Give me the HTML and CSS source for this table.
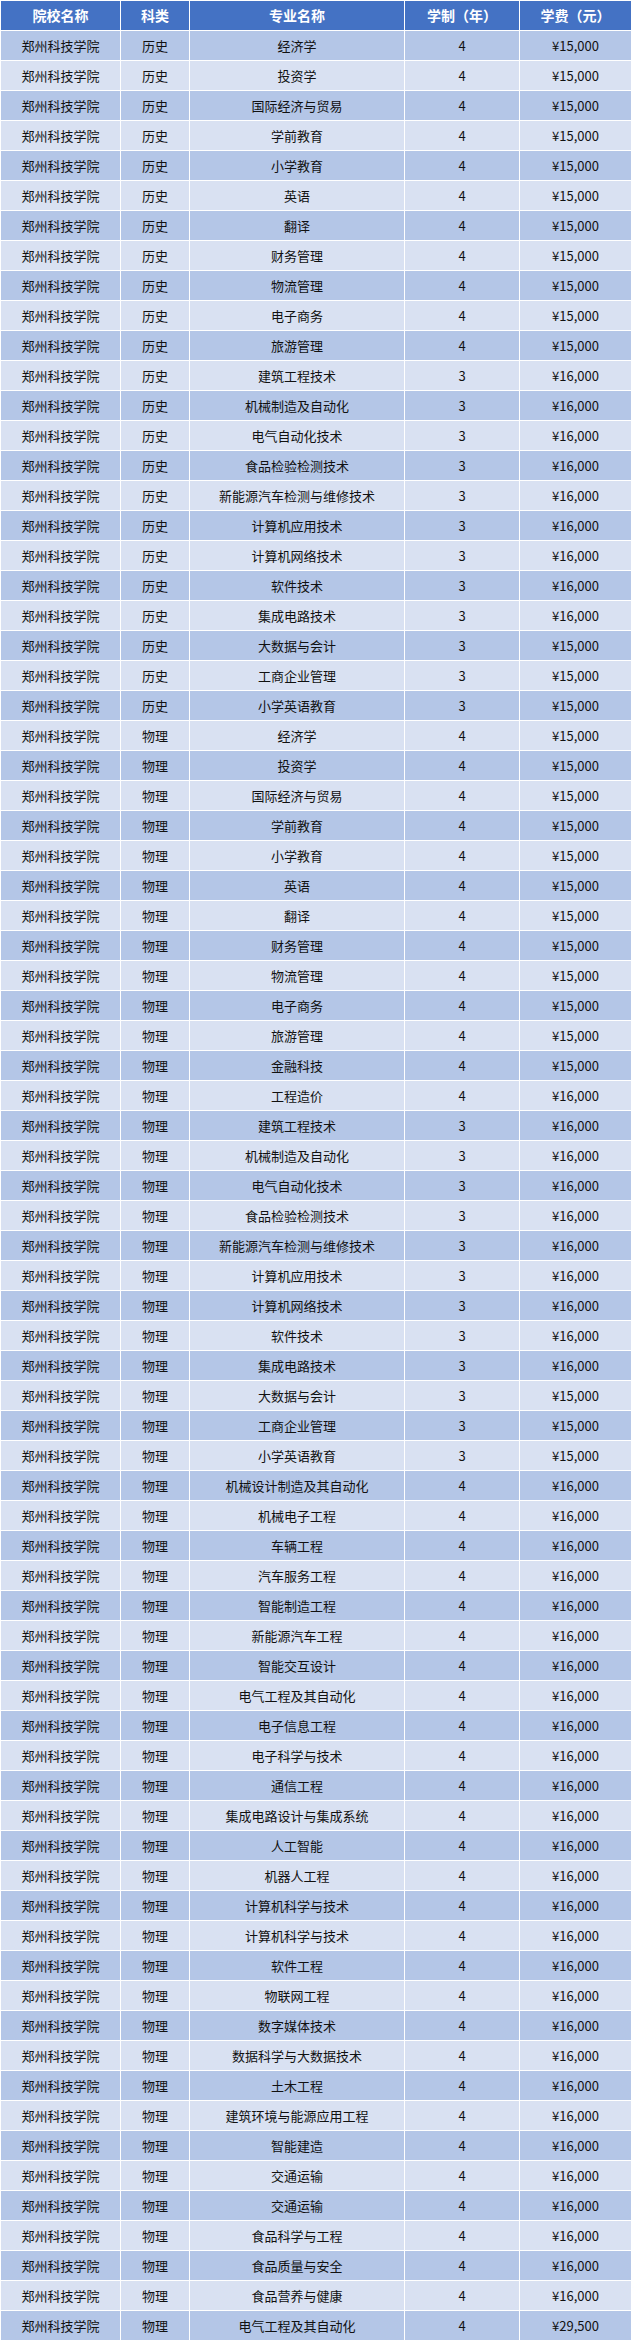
FILE: index.html
```html
<!DOCTYPE html>
<html lang="zh-CN">
<head>
<meta charset="utf-8">
<title>郑州科技学院</title>
<link rel="stylesheet" href="styles.css">
</head>
<body>
<table class="fees">
<colgroup><col class="c1"><col class="c2"><col class="c3"><col class="c4"><col class="c5"></colgroup>
<thead>
<tr><th>院校名称</th><th>科类</th><th>专业名称</th><th>学制（年）</th><th>学费（元）</th></tr>
</thead>
<tbody>
<tr><td>郑州科技学院</td><td>历史</td><td>经济学</td><td>4</td><td>¥15,000</td></tr>
<tr><td>郑州科技学院</td><td>历史</td><td>投资学</td><td>4</td><td>¥15,000</td></tr>
<tr><td>郑州科技学院</td><td>历史</td><td>国际经济与贸易</td><td>4</td><td>¥15,000</td></tr>
<tr><td>郑州科技学院</td><td>历史</td><td>学前教育</td><td>4</td><td>¥15,000</td></tr>
<tr><td>郑州科技学院</td><td>历史</td><td>小学教育</td><td>4</td><td>¥15,000</td></tr>
<tr><td>郑州科技学院</td><td>历史</td><td>英语</td><td>4</td><td>¥15,000</td></tr>
<tr><td>郑州科技学院</td><td>历史</td><td>翻译</td><td>4</td><td>¥15,000</td></tr>
<tr><td>郑州科技学院</td><td>历史</td><td>财务管理</td><td>4</td><td>¥15,000</td></tr>
<tr><td>郑州科技学院</td><td>历史</td><td>物流管理</td><td>4</td><td>¥15,000</td></tr>
<tr><td>郑州科技学院</td><td>历史</td><td>电子商务</td><td>4</td><td>¥15,000</td></tr>
<tr><td>郑州科技学院</td><td>历史</td><td>旅游管理</td><td>4</td><td>¥15,000</td></tr>
<tr><td>郑州科技学院</td><td>历史</td><td>建筑工程技术</td><td>3</td><td>¥16,000</td></tr>
<tr><td>郑州科技学院</td><td>历史</td><td>机械制造及自动化</td><td>3</td><td>¥16,000</td></tr>
<tr><td>郑州科技学院</td><td>历史</td><td>电气自动化技术</td><td>3</td><td>¥16,000</td></tr>
<tr><td>郑州科技学院</td><td>历史</td><td>食品检验检测技术</td><td>3</td><td>¥16,000</td></tr>
<tr><td>郑州科技学院</td><td>历史</td><td>新能源汽车检测与维修技术</td><td>3</td><td>¥16,000</td></tr>
<tr><td>郑州科技学院</td><td>历史</td><td>计算机应用技术</td><td>3</td><td>¥16,000</td></tr>
<tr><td>郑州科技学院</td><td>历史</td><td>计算机网络技术</td><td>3</td><td>¥16,000</td></tr>
<tr><td>郑州科技学院</td><td>历史</td><td>软件技术</td><td>3</td><td>¥16,000</td></tr>
<tr><td>郑州科技学院</td><td>历史</td><td>集成电路技术</td><td>3</td><td>¥16,000</td></tr>
<tr><td>郑州科技学院</td><td>历史</td><td>大数据与会计</td><td>3</td><td>¥15,000</td></tr>
<tr><td>郑州科技学院</td><td>历史</td><td>工商企业管理</td><td>3</td><td>¥15,000</td></tr>
<tr><td>郑州科技学院</td><td>历史</td><td>小学英语教育</td><td>3</td><td>¥15,000</td></tr>
<tr><td>郑州科技学院</td><td>物理</td><td>经济学</td><td>4</td><td>¥15,000</td></tr>
<tr><td>郑州科技学院</td><td>物理</td><td>投资学</td><td>4</td><td>¥15,000</td></tr>
<tr><td>郑州科技学院</td><td>物理</td><td>国际经济与贸易</td><td>4</td><td>¥15,000</td></tr>
<tr><td>郑州科技学院</td><td>物理</td><td>学前教育</td><td>4</td><td>¥15,000</td></tr>
<tr><td>郑州科技学院</td><td>物理</td><td>小学教育</td><td>4</td><td>¥15,000</td></tr>
<tr><td>郑州科技学院</td><td>物理</td><td>英语</td><td>4</td><td>¥15,000</td></tr>
<tr><td>郑州科技学院</td><td>物理</td><td>翻译</td><td>4</td><td>¥15,000</td></tr>
<tr><td>郑州科技学院</td><td>物理</td><td>财务管理</td><td>4</td><td>¥15,000</td></tr>
<tr><td>郑州科技学院</td><td>物理</td><td>物流管理</td><td>4</td><td>¥15,000</td></tr>
<tr><td>郑州科技学院</td><td>物理</td><td>电子商务</td><td>4</td><td>¥15,000</td></tr>
<tr><td>郑州科技学院</td><td>物理</td><td>旅游管理</td><td>4</td><td>¥15,000</td></tr>
<tr><td>郑州科技学院</td><td>物理</td><td>金融科技</td><td>4</td><td>¥15,000</td></tr>
<tr><td>郑州科技学院</td><td>物理</td><td>工程造价</td><td>4</td><td>¥16,000</td></tr>
<tr><td>郑州科技学院</td><td>物理</td><td>建筑工程技术</td><td>3</td><td>¥16,000</td></tr>
<tr><td>郑州科技学院</td><td>物理</td><td>机械制造及自动化</td><td>3</td><td>¥16,000</td></tr>
<tr><td>郑州科技学院</td><td>物理</td><td>电气自动化技术</td><td>3</td><td>¥16,000</td></tr>
<tr><td>郑州科技学院</td><td>物理</td><td>食品检验检测技术</td><td>3</td><td>¥16,000</td></tr>
<tr><td>郑州科技学院</td><td>物理</td><td>新能源汽车检测与维修技术</td><td>3</td><td>¥16,000</td></tr>
<tr><td>郑州科技学院</td><td>物理</td><td>计算机应用技术</td><td>3</td><td>¥16,000</td></tr>
<tr><td>郑州科技学院</td><td>物理</td><td>计算机网络技术</td><td>3</td><td>¥16,000</td></tr>
<tr><td>郑州科技学院</td><td>物理</td><td>软件技术</td><td>3</td><td>¥16,000</td></tr>
<tr><td>郑州科技学院</td><td>物理</td><td>集成电路技术</td><td>3</td><td>¥16,000</td></tr>
<tr><td>郑州科技学院</td><td>物理</td><td>大数据与会计</td><td>3</td><td>¥15,000</td></tr>
<tr><td>郑州科技学院</td><td>物理</td><td>工商企业管理</td><td>3</td><td>¥15,000</td></tr>
<tr><td>郑州科技学院</td><td>物理</td><td>小学英语教育</td><td>3</td><td>¥15,000</td></tr>
<tr><td>郑州科技学院</td><td>物理</td><td>机械设计制造及其自动化</td><td>4</td><td>¥16,000</td></tr>
<tr><td>郑州科技学院</td><td>物理</td><td>机械电子工程</td><td>4</td><td>¥16,000</td></tr>
<tr><td>郑州科技学院</td><td>物理</td><td>车辆工程</td><td>4</td><td>¥16,000</td></tr>
<tr><td>郑州科技学院</td><td>物理</td><td>汽车服务工程</td><td>4</td><td>¥16,000</td></tr>
<tr><td>郑州科技学院</td><td>物理</td><td>智能制造工程</td><td>4</td><td>¥16,000</td></tr>
<tr><td>郑州科技学院</td><td>物理</td><td>新能源汽车工程</td><td>4</td><td>¥16,000</td></tr>
<tr><td>郑州科技学院</td><td>物理</td><td>智能交互设计</td><td>4</td><td>¥16,000</td></tr>
<tr><td>郑州科技学院</td><td>物理</td><td>电气工程及其自动化</td><td>4</td><td>¥16,000</td></tr>
<tr><td>郑州科技学院</td><td>物理</td><td>电子信息工程</td><td>4</td><td>¥16,000</td></tr>
<tr><td>郑州科技学院</td><td>物理</td><td>电子科学与技术</td><td>4</td><td>¥16,000</td></tr>
<tr><td>郑州科技学院</td><td>物理</td><td>通信工程</td><td>4</td><td>¥16,000</td></tr>
<tr><td>郑州科技学院</td><td>物理</td><td>集成电路设计与集成系统</td><td>4</td><td>¥16,000</td></tr>
<tr><td>郑州科技学院</td><td>物理</td><td>人工智能</td><td>4</td><td>¥16,000</td></tr>
<tr><td>郑州科技学院</td><td>物理</td><td>机器人工程</td><td>4</td><td>¥16,000</td></tr>
<tr><td>郑州科技学院</td><td>物理</td><td>计算机科学与技术</td><td>4</td><td>¥16,000</td></tr>
<tr><td>郑州科技学院</td><td>物理</td><td>计算机科学与技术</td><td>4</td><td>¥16,000</td></tr>
<tr><td>郑州科技学院</td><td>物理</td><td>软件工程</td><td>4</td><td>¥16,000</td></tr>
<tr><td>郑州科技学院</td><td>物理</td><td>物联网工程</td><td>4</td><td>¥16,000</td></tr>
<tr><td>郑州科技学院</td><td>物理</td><td>数字媒体技术</td><td>4</td><td>¥16,000</td></tr>
<tr><td>郑州科技学院</td><td>物理</td><td>数据科学与大数据技术</td><td>4</td><td>¥16,000</td></tr>
<tr><td>郑州科技学院</td><td>物理</td><td>土木工程</td><td>4</td><td>¥16,000</td></tr>
<tr><td>郑州科技学院</td><td>物理</td><td>建筑环境与能源应用工程</td><td>4</td><td>¥16,000</td></tr>
<tr><td>郑州科技学院</td><td>物理</td><td>智能建造</td><td>4</td><td>¥16,000</td></tr>
<tr><td>郑州科技学院</td><td>物理</td><td>交通运输</td><td>4</td><td>¥16,000</td></tr>
<tr><td>郑州科技学院</td><td>物理</td><td>交通运输</td><td>4</td><td>¥16,000</td></tr>
<tr><td>郑州科技学院</td><td>物理</td><td>食品科学与工程</td><td>4</td><td>¥16,000</td></tr>
<tr><td>郑州科技学院</td><td>物理</td><td>食品质量与安全</td><td>4</td><td>¥16,000</td></tr>
<tr><td>郑州科技学院</td><td>物理</td><td>食品营养与健康</td><td>4</td><td>¥16,000</td></tr>
<tr><td>郑州科技学院</td><td>物理</td><td>电气工程及其自动化</td><td>4</td><td>¥29,500</td></tr>
</tbody>
</table>
</body>
</html>
```
FILE: styles.css
```css
html, body {
  margin: 0;
  padding: 0;
  background: #ffffff;
}

.fees {
  border-collapse: separate;
  border-spacing: 1px;
  background: #ffffff;
  table-layout: fixed;
  width: 632px;
  font-family: "Noto Sans CJK SC", "Noto Sans", sans-serif;
  font-size: 13px;
  color: #111111;
}

.c1 { width: 119px; }
.c2 { width: 68px; }
.c3 { width: 214px; }
.c4 { width: 114px; }
.c5 { width: 111px; }

.fees th,
.fees td {
  height: 29px;
  padding: 0;
  text-align: center;
  vertical-align: middle;
  line-height: 29px;
  white-space: nowrap;
  overflow: hidden;
}

.fees th {
  background: #4472c4;
  color: #ffffff;
  font-weight: 700;
  font-size: 14px;
}

.fees tbody tr:nth-child(odd) td {
  background: #b4c6e7;
}

.fees tbody tr:nth-child(even) td {
  background: #d9e1f2;
}
```
